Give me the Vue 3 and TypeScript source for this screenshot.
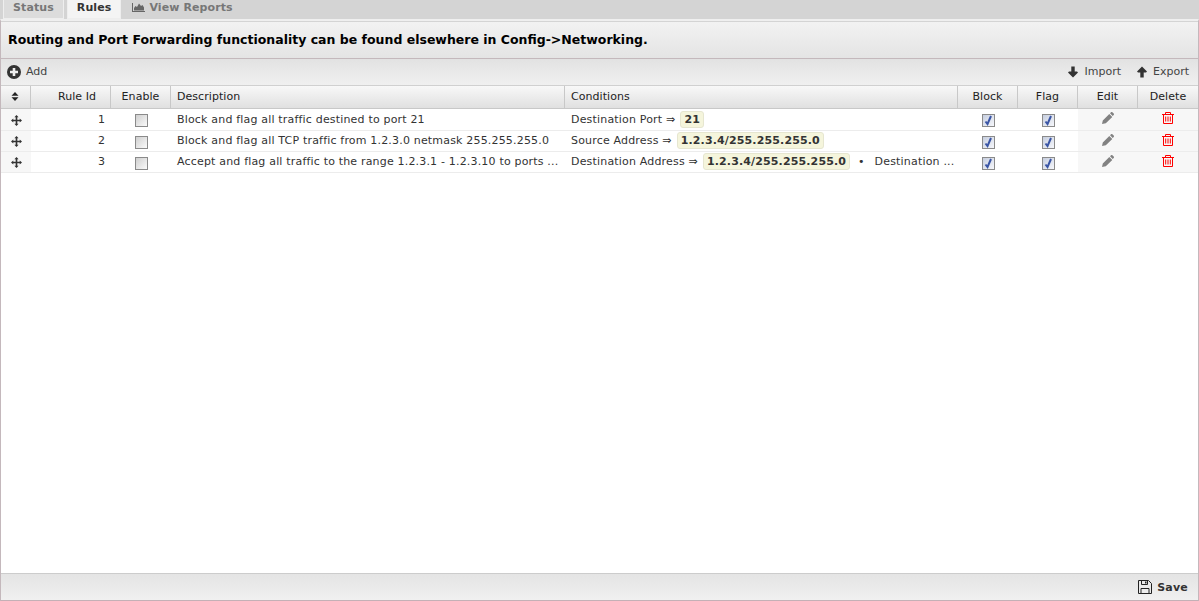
<script setup lang="ts">
interface Cond { label: string; value: string }
interface Rule { id: number; desc: string; conds: Cond[]; more?: string }
const rules: Rule[] = [
  { id: 1, desc: 'Block and flag all traffic destined to port 21', conds: [{ label: 'Destination Port ⇒', value: '21' }] },
  { id: 2, desc: 'Block and flag all TCP traffic from 1.2.3.0 netmask 255.255.255.0', conds: [{ label: 'Source Address ⇒', value: '1.2.3.4/255.255.255.0' }] },
  { id: 3, desc: 'Accept and flag all traffic to the range 1.2.3.1 - 1.2.3.10 to ports ...', conds: [{ label: 'Destination Address ⇒', value: '1.2.3.4/255.255.255.0' }], more: 'Destination ...' },
]
</script>

<template>
  <div class="page">
    <div class="tabs">
      <div class="tab">Status</div>
      <div class="tab active">Rules</div>
      <div class="tab plain">
        <svg class="chart" viewBox="0 0 13 9" width="13" height="9"><path d="M0 0h1v8h12v1H0z" fill="#666"/><path d="M2 7.500V5l1.500-2L5 4l2-3.500L9 3l1.500-1L12 4.500v3z" fill="#666"/></svg>
        <span>View Reports</span>
      </div>
    </div>
    <div class="panel">
      <div class="notice">Routing and Port Forwarding functionality can be found elsewhere in Config-&gt;Networking.</div>
      <div class="toolbar">
        <div class="tool">
          <svg width="14" height="14" viewBox="0 0 14 14"><circle cx="7" cy="7" r="7" fill="#333"/><path d="M5.700 3h2.600v2.700H11v2.600H8.300V11H5.700V8.300H3V5.700h2.700z" fill="#eee"/></svg>
          <span>Add</span>
        </div>
        <div class="spacer"></div>
        <div class="tool">
          <svg width="12" height="12" viewBox="0 0 12 12"><path d="M4.300 .5h3.400v5H10l1 1-5 5-5-5 1-1h2.300z" fill="#333"/></svg>
          <span>Import</span>
        </div>
        <div class="tool export">
          <svg width="12" height="12" viewBox="0 0 12 12"><path d="M4.300 11.500h3.400v-5H10l1-1-5-5-5 5 1 1h2.300z" fill="#333"/></svg>
          <span>Export</span>
        </div>
      </div>
      <div class="grid">
        <div class="row head">
          <div class="cell c-drag center">
            <svg class="sort" width="8" height="9" viewBox="0 0 8 9"><path d="M4 0l3.500 3.700H.5zM4 9L.5 5.300h7z" fill="#222"/></svg>
          </div>
          <div class="cell c-id id-head">Rule Id</div>
          <div class="cell c-en center">Enable</div>
          <div class="cell c-desc">Description</div>
          <div class="cell c-cond">Conditions</div>
          <div class="cell c-chk center">Block</div>
          <div class="cell c-chk center">Flag</div>
          <div class="cell c-chk center">Edit</div>
          <div class="cell c-del center">Delete</div>
        </div>
        <div v-for="r in rules" :key="r.id" class="row body">
          <div class="cell c-drag center shade">
            <svg class="move" width="11" height="11" viewBox="0 0 12 12"><path d="M6 0l2.300 2.500H6.900v2.600h2.600V3.700L12 6 9.500 8.300V6.900H6.900v2.600h1.400L6 12 3.700 9.500h1.400V6.900H2.500v1.400L0 6l2.500-2.300v1.400h2.600V2.500H3.700z" fill="#333"/></svg>
          </div>
          <div class="cell c-id num">{{ r.id }}</div>
          <div class="cell c-en center"><span class="box"></span></div>
          <div class="cell c-desc"><span class="line">{{ r.desc }}</span></div>
          <div class="cell c-cond conds">
            <template v-for="c in r.conds" :key="c.label">
              <span class="line">{{ c.label }}</span>
              <span class="val">{{ c.value }}</span>
            </template>
            <template v-if="r.more">
              <span class="dot">•</span>
              <span class="line">{{ r.more }}</span>
            </template>
          </div>
          <div class="cell c-chk center"><span class="box on"><svg width="11" height="11" viewBox="0 0 11 11"><path d="M2.500 6.500l2 2.500 3.500-8" fill="none" stroke="#3a55a5" stroke-width="2"/></svg></span></div>
          <div class="cell c-chk center"><span class="box on"><svg width="11" height="11" viewBox="0 0 11 11"><path d="M2.500 6.500l2 2.500 3.500-8" fill="none" stroke="#3a55a5" stroke-width="2"/></svg></span></div>
          <div class="cell c-chk center shade icon-up">
            <svg width="12" height="12" viewBox="0 0 12 12"><path d="M0 12l.8-3.500L7.300 2l3 3-6.500 6.200zM8 1.300L9 .3a1 1 0 0 1 1.400 0l1.300 1.300a1 1 0 0 1 0 1.400l-1 1z" fill="#828282"/></svg>
          </div>
          <div class="cell c-del center shade icon-up">
            <svg width="12" height="12" viewBox="0 0 12 12" fill="none" stroke="#f00"><path d="M0 2.500h12M3.500 2.500V.5h5v2M1.500 2.500v9h9v-9M3.700 4.500v5M6 4.500v5M8.300 4.500v5"/></svg>
          </div>
        </div>
      </div>
      <div class="footer">
        <div class="save">
          <svg width="14" height="14" viewBox="0 0 14 14" fill="none" stroke="#222"><path d="M.5.500h10l3 3v10H.5zM3.500.5v4h6v-4M3 13.500V8.500h8v5"/><path d="M7 1.500h1.500v2H7z" fill="#222" stroke="none"/></svg>
          <span>Save</span>
        </div>
      </div>
    </div>
  </div>
</template>

<style>
html, body { margin: 0; background: #fff; }
</style>

<style scoped>
.page {
  width: 1199px;
  height: 601px;
  display: flex;
  flex-direction: column;
  font-family: "DejaVu Sans", sans-serif;
  font-size: 11px;
  color: #333;
  background: #fff;
  overflow: hidden;
}
.tabs {
  height: 19px;
  display: flex;
  padding-left: 3px;
  gap: 3px;
  background: #d4d4d4;
  flex: none;
}
.tab {
  padding: 0 9px;
  height: 19px;
  line-height: 15px;
  font-weight: bold;
  color: #777;
  background: #dcdcdc;
  border: 1px solid #eee;
  border-top: 0;
  box-sizing: border-box;
  letter-spacing: 0.1px;
  display: flex;
  align-items: flex-start;
  gap: 4px;
}
.tab.active {
  color: #333;
  background: #f4f4f4;
}
.tab.plain {
  background: none;
  border-color: transparent;
  padding-left: 7px;
}
.chart { margin-top: 3px; }
.panel {
  flex: 1;
  display: flex;
  flex-direction: column;
  border: 1px solid #c4b8bc;
  border-top: 2px solid #efefef;
  border-bottom: 1px solid #c4b0b6;
  min-height: 0;
}
.notice {
  height: 38px;
  box-sizing: border-box;
  padding: 10px 7px 0;
  font-size: 12.5px;
  font-weight: bold;
  color: #000;
  line-height: 16px;
  background: linear-gradient(#f2f2f2, #e4e4e4);
  border-top: 1px solid #d4d4d4;
  border-bottom: 1px solid #c4b8bc;
  flex: none;
}
.toolbar {
  height: 26px;
  display: flex;
  align-items: center;
  padding: 0 9px 0 6px;
  box-sizing: border-box;
  background: linear-gradient(#e2e2e2, #f0f0f0);
  flex: none;
}
.spacer { flex: 1; }
.tool {
  display: flex;
  align-items: center;
  gap: 5px;
  color: #444;
}
.tool span { margin-bottom: 2px; }
.export { margin-left: 15px; }
.grid { flex: 1; background: #fff; min-height: 0; }
.row { display: flex; }
.head {
  height: 24px;
  background: linear-gradient(#f8f8f8, #e0e0e0);
  border-top: 1px solid #d0d0d0;
  border-bottom: 1px solid #c8c8c8;
  box-sizing: border-box;
  color: #222;
  letter-spacing: 0.05px;
}
.head .cell { border-right: 1px solid #c8c8c8; padding-bottom: 2px; }
.head .cell:last-child { border-right: 0; }
.body {
  height: 20px;
  box-sizing: content-box;
  border-bottom: 1px solid #ececec;
}
.head + .body { height: 21px; }
.body + .body .c-id,
.body + .body .c-desc,
.body + .body .c-cond { padding-bottom: 2px; }
.cell {
  display: flex;
  align-items: center;
  padding: 0 6px;
  box-sizing: border-box;
  flex: none;
  min-width: 0;
}
.center { justify-content: center; padding: 0; }
.c-drag { width: 30px; }
.c-id { width: 80px; }
.id-head { justify-content: center; padding-left: 19px; }
.num { justify-content: flex-end; padding-right: 6px; }
.c-en { width: 60px; }
.c-desc { width: 394px; }
.c-cond { width: 393px; }
.c-chk { width: 60px; }
.c-del { width: 60px; }
.shade { background: #f7f7f7; }
.sort { margin-right: 1px; }
.move { margin-top: 1px; margin-left: 1px; }
.icon-up svg { margin-bottom: 3px; }
.line {
  white-space: nowrap;
  letter-spacing: 0.18px;
}
.conds { gap: 5px; }
.box {
  width: 11px;
  height: 11px;
  display: block;
  flex: none;
  border: 1px solid #8a8a8a;
  background: linear-gradient(135deg, #cfcfcf, #fafafa);
  margin-top: 2px;
}
.box.on { background: linear-gradient(135deg, #c6cedf, #f6f7fb); }
.box.on svg { display: block; }
.val {
  display: block;
  flex: none;
  font-weight: bold;
  color: #333;
  background: #f5f5dc;
  border: 1px solid #e6e6d0;
  border-radius: 3px;
  padding: 0 3px;
  line-height: 15px;
  letter-spacing: 0.14px;
}
.dot { margin: 0 5px 0 3px; }
.footer {
  height: 27px;
  flex: none;
  display: flex;
  justify-content: flex-end;
  align-items: center;
  padding-right: 10px;
  background: linear-gradient(#e4e4e4, #f0f0f0);
  border-top: 1px solid #ccc;
  box-sizing: border-box;
}
.save {
  display: flex;
  align-items: center;
  gap: 5px;
  font-weight: bold;
  color: #333;
  letter-spacing: 0.2px;
}
</style>
